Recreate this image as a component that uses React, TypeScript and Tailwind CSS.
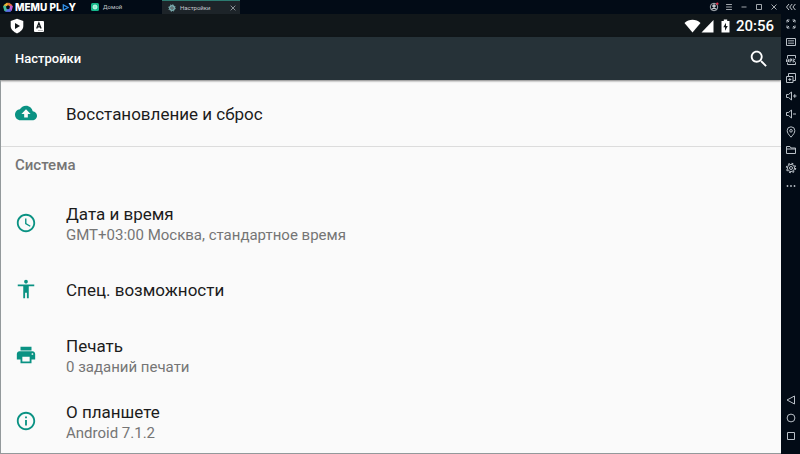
import type { ReactNode } from "react";

type IconProps = { children: ReactNode; className?: string; box?: string };

function Line({ children, className = "size-3", box = "0 0 12 12" }: IconProps) {
  return (
    <svg viewBox={box} className={className} fill="none" stroke="currentColor" strokeWidth="1" aria-hidden="true">
      {children}
    </svg>
  );
}

function Solid({ children, className = "size-[22px]", box = "0 0 24 24" }: IconProps) {
  return (
    <svg viewBox={box} className={className} fill="currentColor" aria-hidden="true">
      {children}
    </svg>
  );
}

function Logo() {
  return (
    <div className="flex w-[88px] items-center gap-0.5 pl-[3px] text-white" aria-label="MEMU PLAY">
      <svg viewBox="0 0 20 20" className="size-[10px]" fill="none" strokeWidth="5.500" aria-hidden="true">
        <path d="M2.500 8.500 10 3" stroke="#f3b62f" />
        <path d="M10 3l7.500 5.500" stroke="#e8743c" />
        <path d="M17.500 7.500l-3 9.500" stroke="#c65bd0" />
        <path d="M15.500 17H4.500" stroke="#5a6fe8" />
        <path d="M5.500 17.500 2.500 7.500" stroke="#43bd9b" />
      </svg>
      <div className="flex items-center font-[Inter,sans-serif] text-[10px] leading-[14px] font-extrabold">
        <span>MEMU&nbsp;PL</span>
        <svg viewBox="0 0 8 8" className="size-[7px]" fill="none" stroke="#2f8fe8" strokeWidth="1.5" aria-hidden="true">
          <path d="M1.500 1v6L7 4z" />
        </svg>
        <span>Y</span>
      </div>
    </div>
  );
}

const windowControls = [
  {
    label: "Аккаунт",
    icon: (
      <Line className="size-[10px]">
        <circle cx="6" cy="6" r="4.500" />
        <circle cx="6" cy="4.800" r="1.600" fill="currentColor" />
        <path d="M3 9c.8-2 5.200-2 6 0" strokeWidth="1.500" />
        <circle cx="10" cy="2" r="1.400" fill="#e8304a" stroke="none" />
      </Line>
    ),
  },
  { label: "Меню", icon: <Line className="size-[10px]"><path d="M2.500 3h7M2.500 6h7M2.500 9h7" /></Line> },
  { label: "Свернуть", icon: <Line className="size-[10px]"><path d="M3 6h6" /></Line> },
  { label: "Развернуть", icon: <Line className="size-[10px]"><path d="M3 3h6v6H3z" /></Line> },
  { label: "Закрыть", icon: <Line className="size-[10px]"><path d="m3 3 6 6M9 3 3 9" /></Line> },
];

const tools = [
  {
    label: "Полный экран",
    icon: <Line><path d="M2 4.500V2h2.500M7.500 2H10v2.500M10 7.500V10H7.500M4.500 10H2V7.500M2 2l2 2M10 2 8 4M10 10 8 8M2 10l2-2" /></Line>,
  },
  {
    label: "Клавиатура",
    icon: (
      <Line>
        <path d="M1.500 2.500h9v7h-9z" />
        <path d="M3 4.500h6M3 6h6M3 7.500h6" strokeWidth=".8" opacity=".8" />
      </Line>
    ),
  },
  {
    label: "Установить APK",
    icon: (
      <Line>
        <path d="M2.500 4V1.500h8V4M2.500 8.500v2h8v-2" />
        <path d="M1.500 8V5.500c0-1 2-1 2 0V8M1.500 7h2M5 8.500V5h1.500v1.800H5M8.200 4.500v4M10.500 4.800 8.500 6.500l2 1.800" />
      </Line>
    ),
  },
  {
    label: "Мультиокно",
    icon: <Line><path d="M1.500 4.500h6.500v6H1.500zM3.500 4.500V1.500h7v7H8M4.800 6v3M3.300 7.500h3" /></Line>,
  },
  { label: "Громче", icon: <Line><path d="M1.500 4.500h2L6.500 2v8l-3-2.500h-2zM8 6h3.500M9.750 4.200v3.600" /></Line> },
  { label: "Тише", icon: <Line><path d="M1.500 4.500h2L6.500 2v8l-3-2.500h-2zM8 6h3" /></Line> },
  {
    label: "Местоположение",
    icon: <Line><path d="M6 11.200C3.300 8.200 2.200 6.500 2.200 4.600a3.800 3.800 0 0 1 7.600 0C9.800 6.500 8.700 8.200 6 11.200z" /><circle cx="6" cy="4.800" r="1.300" /></Line>,
  },
  { label: "Общая папка", icon: <Line><path d="M1.500 9.500V2.500H5l1 1.500h4.500v5.500zM1.500 5h9" /></Line> },
  {
    label: "Настройки эмулятора",
    icon: (
      <Line>
        <circle cx="6" cy="6" r="3.600" />
        <circle cx="6" cy="6" r="4.600" strokeWidth="1.200" strokeDasharray="1.800 1.813" />
        <circle cx="6" cy="6" r="1.500" />
      </Line>
    ),
  },
  {
    label: "Ещё",
    icon: <Solid className="size-3" box="0 0 12 12"><circle cx="2.500" cy="6" r=".9" /><circle cx="6" cy="6" r=".9" /><circle cx="9.500" cy="6" r=".9" /></Solid>,
  },
];

const navigation = [
  { label: "Назад", icon: <Line><path d="M9.500 2v8L2 6z" /></Line> },
  { label: "Домой", icon: <Line><circle cx="6" cy="6" r="3.900" /></Line> },
  { label: "Недавние", icon: <Line><path d="M2.500 2.500h7v7h-7z" /></Line> },
];

type Item = { title: string; detail?: string; icon: ReactNode };

const backup: Item = {
  title: "Восстановление и сброс",
  icon: <Solid><path d="M19.350 10.040C18.670 6.590 15.640 4 12 4 9.110 4 6.600 5.640 5.350 8.040 2.340 8.360 0 10.910 0 14c0 3.310 2.690 6 6 6h13c2.760 0 5-2.240 5-5 0-2.640-2.050-4.780-4.650-4.960zM14 13v4h-4v-4H7l5-5 5 5h-3z" /></Solid>,
};

const system: Item[] = [
  {
    title: "Дата и время",
    detail: "GMT+03:00 Москва, стандартное время",
    icon: <Solid><path d="M11.990 2C6.470 2 2 6.480 2 12s4.470 10 9.990 10C17.520 22 22 17.520 22 12S17.520 2 11.990 2zM12 20c-4.420 0-8-3.580-8-8s3.580-8 8-8 8 3.580 8 8-3.580 8-8 8zm.5-13H11v6l5.250 3.150.75-1.230-4.500-2.670z" /></Solid>,
  },
  {
    title: "Спец. возможности",
    icon: <Solid><path d="M12 2c1.100 0 2 .9 2 2s-.9 2-2 2-2-.9-2-2 .9-2 2-2zm9 7h-6v13h-2v-6h-2v6H9V9H3V7h18v2z" /></Solid>,
  },
  {
    title: "Печать",
    detail: "0 заданий печати",
    icon: <Solid><path d="M19 8H5c-1.660 0-3 1.340-3 3v6h4v4h12v-4h4v-6c0-1.660-1.340-3-3-3zm-3 11H8v-5h8v5zm3-7c-.55 0-1-.45-1-1s.45-1 1-1 1 .45 1 1-.45 1-1 1zm-1-9H6v4h12V3z" /></Solid>,
  },
  {
    title: "О планшете",
    detail: "Android 7.1.2",
    icon: <Solid><path d="M11 17h2v-6h-2v6zm1-15C6.480 2 2 6.480 2 12s4.480 10 10 10 10-4.480 10-10S17.520 2 12 2zm0 18c-4.410 0-8-3.590-8-8s3.590-8 8-8 8 3.590 8 8-3.590 8-8 8zM11 9h2V7h-2v2z" /></Solid>,
  },
];

function Row({ item }: { item: Item }) {
  return (
    <button type="button" className="flex h-[66px] w-full shrink-0 items-center gap-[29px] pl-[14px] text-left">
      <span className="text-[#0a9283]">{item.icon}</span>
      <span className="flex flex-col pt-0.5">
        <span className="text-[17px] leading-[22px] text-[#1c1c1c]">{item.title}</span>
        {item.detail && <span className="text-[15px] leading-[20px] text-[#757575]">{item.detail}</span>}
      </span>
    </button>
  );
}

function ToolButton({ label, icon }: { label: string; icon: ReactNode }) {
  return (
    <button type="button" aria-label={label} className="flex h-[18px] w-full items-center justify-center">
      {icon}
    </button>
  );
}

export default function App() {
  return (
    <div className="flex h-screen flex-col overflow-hidden bg-[#020b16] font-[Roboto,sans-serif]">
      <header className="flex h-[14px] shrink-0 text-[#c3c8cd]">
        <Logo />
        <nav className="flex text-[6px] leading-[14px]">
          <button type="button" className="flex w-[74px] items-center gap-1 pl-[3px]">
            <svg viewBox="0 0 16 16" className="size-[8px]" aria-hidden="true">
              <rect width="16" height="16" rx="3" fill="#16b78a" />
              <circle cx="8" cy="8" r="4" fill="#8ff0d0" stroke="#e6fff7" strokeWidth="1.500" />
            </svg>
            Домой
          </button>
          <div className="flex w-[78px] items-center border-t border-[#2c7a70] bg-[#1d2429]">
            <button type="button" className="flex flex-1 items-center gap-1 pl-[6px]">
              <svg viewBox="0 0 16 16" className="size-[8px]" fill="none" stroke="#7fb1b4" aria-hidden="true">
                <circle cx="8" cy="8" r="4.500" strokeWidth="3" />
                <circle cx="8" cy="8" r="6.500" strokeWidth="2" strokeDasharray="2.500 2.600" />
                <circle cx="8" cy="8" r="1.500" fill="#d7e8e8" stroke="none" />
              </svg>
              Настройки
            </button>
            <button type="button" aria-label="Закрыть вкладку" className="flex w-[15px] justify-center">
              <Line className="size-[8px]"><path d="m2.500 2.500 7 7M9.500 2.500l-7 7" /></Line>
            </button>
          </div>
        </nav>
        <div className="ml-auto flex">
          {windowControls.map((control) => (
            <button key={control.label} type="button" aria-label={control.label} className="flex w-[15px] items-center justify-center">
              {control.icon}
            </button>
          ))}
          <button type="button" aria-label="Скрыть панель" className="flex w-[19px] items-center justify-center">
            <Line><path d="M4 3 1.500 6 4 9M7.200 3 4.700 6l2.500 3M10.400 3 7.900 6l2.500 3" /></Line>
          </button>
        </div>
      </header>

      <div className="flex min-h-0 flex-1">
        <main className="flex min-w-0 flex-1 flex-col overflow-hidden bg-[#fafafa]">
          <div className="flex h-[23px] shrink-0 items-center bg-[#11171a] pr-[7px] pl-[9px] text-white">
            <svg viewBox="0 0 16 16" className="size-4" aria-hidden="true">
              <path d="M8 .8 14.300 3v5c0 3.500-3 6-6.300 7.400C4.700 14 1.700 11.500 1.700 8V3z" fill="white" />
              <path d="M6 5v6l5-3z" fill="#11171a" />
            </svg>
            <svg viewBox="0 0 12 12" className="ml-2 size-3" aria-hidden="true">
              <rect x="1" y="1" width="10" height="11" rx="1" fill="white" />
              <path d="m3.700 8.500 2.200-5.500 2.200 5.500M4.500 6.800h2.800" fill="none" stroke="#11171a" strokeWidth="1.300" />
              <path d="M5 10.500h5" stroke="#999" strokeWidth=".7" />
            </svg>
            <div className="ml-auto flex items-center">
              <svg viewBox="0 0 17 14" className="h-[14px] w-[17px]" fill="white" aria-hidden="true">
                <path d="M.5 4C5-.2 12-.2 16.500 4l-8 9.500z" />
              </svg>
              <svg viewBox="0 0 13 14" className="h-[14px] w-[13px]" fill="white" aria-hidden="true">
                <path d="M12.500 1v12.500H.5z" />
              </svg>
              <svg viewBox="0 0 9 14" className="ml-[7px] h-[14px] w-[9px]" aria-hidden="true">
                <path d="M2.800.5h3.400V2h2.300v11.500H.5V2h2.300z" fill="white" />
                <path d="M5 3.800 2.300 8.300h1.700v3.400L6.800 7H5z" fill="#11171a" />
              </svg>
              <time className="ml-[6px] text-[15px] leading-[22px] font-medium">20:56</time>
            </div>
          </div>

          <div className="flex h-[43px] shrink-0 items-center justify-between bg-[#263238] pr-[11px] pl-[15px] text-white shadow-[0_1px_2px_rgba(0,0,0,0.5)]">
            <h1 className="text-[13px] leading-[20px] font-medium">Настройки</h1>
            <button type="button" aria-label="Поиск">
              <Solid>
                <path d="M15.500 14h-.79l-.28-.27C15.410 12.590 16 11.110 16 9.500 16 5.910 13.090 3 9.500 3S3 5.910 3 9.500 5.910 16 9.500 16c1.610 0 3.090-.59 4.230-1.570l.27.28v.79l5 4.990L20.490 19l-4.990-5zm-6 0C7.010 14 5 11.990 5 9.500S7.010 5 9.500 5 14 7.010 14 9.500 11.990 14 9.500 14z" />
              </Solid>
            </button>
          </div>

          <div className="min-h-0 flex-1 overflow-hidden border-b border-l border-[#93999b]">
            <section className="border-b border-[#dcdcdc]">
              <Row item={backup} />
            </section>
            <section>
              <h2 className="pt-2 pb-[15px] pl-[14px] text-[15px] leading-[20px] font-medium text-[#757575]">Система</h2>
              {system.map((item) => (
                <Row key={item.title} item={item} />
              ))}
            </section>
          </div>
        </main>

        <aside className="flex w-[19px] shrink-0 flex-col justify-between pt-px pb-[9px] text-[#b9c0c7]">
          <div>
            {tools.map((tool) => <ToolButton key={tool.label} {...tool} />)}
          </div>
          <div>
            {navigation.map((tool) => <ToolButton key={tool.label} {...tool} />)}
          </div>
        </aside>
      </div>
    </div>
  );
}
